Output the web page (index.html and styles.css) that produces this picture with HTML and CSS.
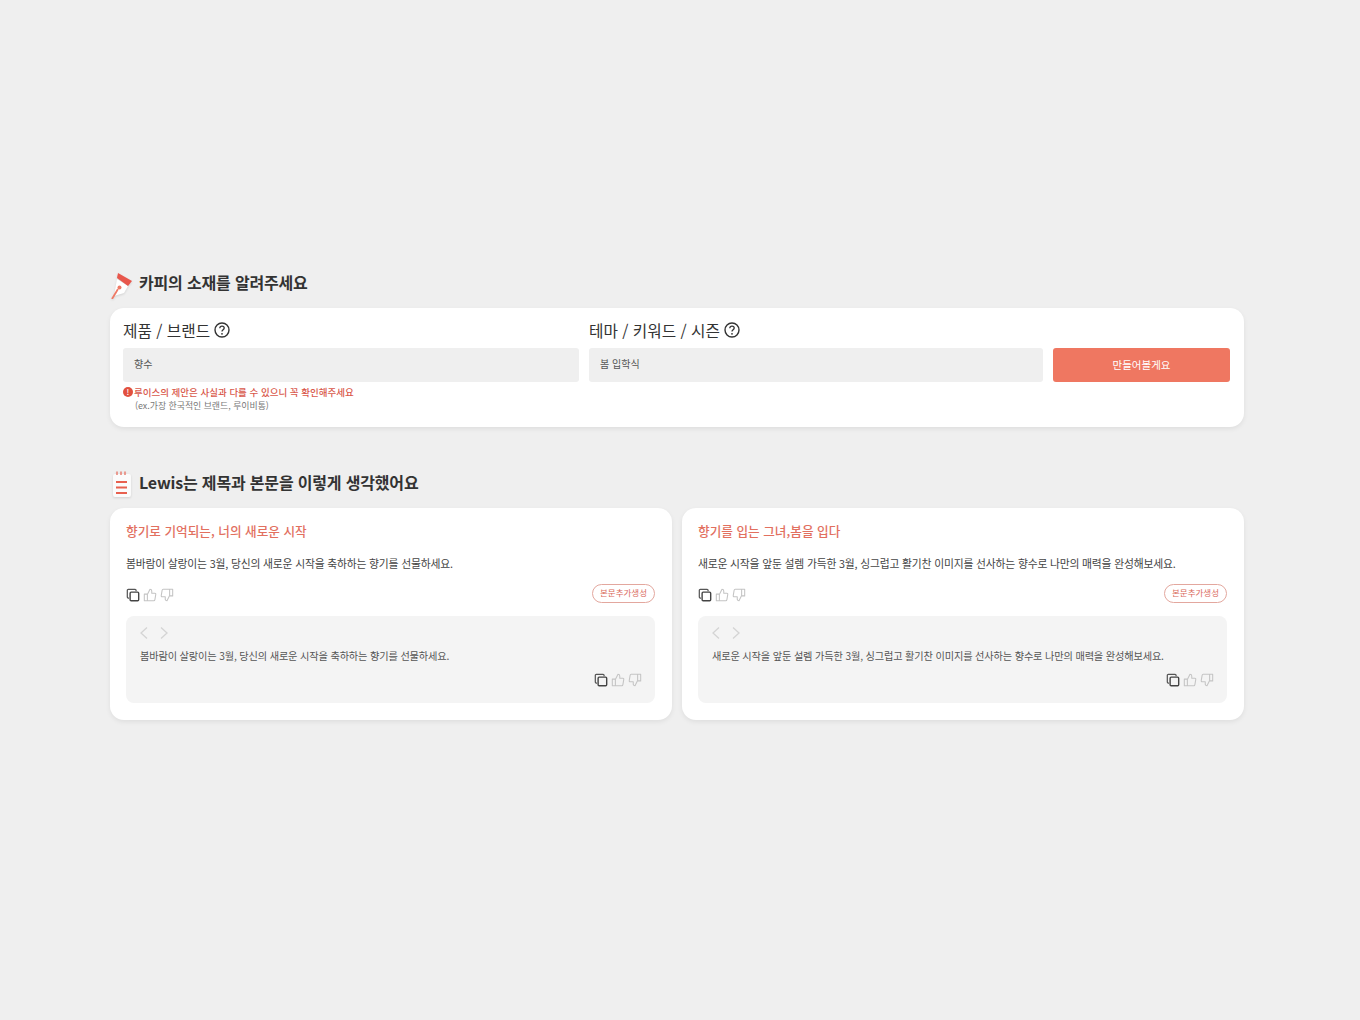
FILE: index.html
```html
<!DOCTYPE html>
<html lang="ko">

<head>
    <meta charset="UTF-8">
    <title>Lewis 카피</title>
    <link rel="stylesheet" href="styles.css">
</head>

<body>
    <svg class="sprites" width="0" height="0" aria-hidden="true">
        <symbol id="copy" viewBox="0 0 16 16">
            <path d="M3.5 11.5H2.6A1.1 1.1 0 0 1 1.5 10.4V2.6A1.1 1.1 0 0 1 2.6 1.5H10.4A1.1 1.1 0 0 1 11.5 2.6V3.6" fill="none" stroke="#555" stroke-width="1.4"/>
            <rect x="4.7" y="4.7" width="9.8" height="9.8" rx="1.2" fill="none" stroke="#444" stroke-width="1.6"/>
        </symbol>
        <symbol id="up" viewBox="0 0 16 16">
            <path d="M5 7v7.5H1.5V7H5zM5 7.4 8 1.5c1.3 0 2 .8 2 2V6h3.6c.7 0 1.1.6 1 1.3l-1 6c-.1.7-.6 1.2-1.3 1.2H5" fill="none" stroke="#c4c4c4" stroke-width="1.2" stroke-linejoin="round"/>
        </symbol>
        <symbol id="down" viewBox="0 0 16 16">
            <path d="M11 9V1.5h3.5V9H11zM11 8.6 8 14.5c-1.3 0-2-.8-2-2V10H2.4c-.7 0-1.1-.6-1-1.3l1-6c.1-.7.6-1.2 1.3-1.2H11" fill="none" stroke="#c4c4c4" stroke-width="1.2" stroke-linejoin="round"/>
        </symbol>
        <symbol id="help" viewBox="0 0 16 16">
            <circle cx="8" cy="8" r="7" fill="none" stroke="#333" stroke-width="1.4"/>
            <path d="M5.8 6.2C5.9 4.9 6.8 4.200 8 4.200c1.3 0 2.200.8 2.200 1.900 0 1.700-2.200 1.700-2.200 3.500" fill="none" stroke="#333" stroke-width="1.3"/>
            <circle cx="8" cy="11.8" r=".9" fill="#333"/>
        </symbol>
    </svg>

    <div class="page">
        <h2 class="section-title">
            <svg class="section-icon" viewBox="0 0 24 30" width="24" height="30">
                <path d="M7 10 18 17 14 24 4 27z" fill="#fff"/>
                <path d="M2 30 8 20" stroke="#ee7a66" stroke-width="1.8" fill="none"/>
                <circle cx="9.5" cy="18.5" r="2" fill="#ee7a66"/>
                <path d="M8 4 22 12 18 17 7 9z" fill="#e8574c"/>
            </svg>
            카피의 소재를 알려주세요
        </h2>

        <section class="panel">
            <div class="field">
                <label class="field-label">제품 / 브랜드 <svg class="help"><use href="#help"/></svg></label>
                <div class="input">향수</div>
            </div>
            <div class="field">
                <label class="field-label">테마 / 키워드 / 시즌 <svg class="help"><use href="#help"/></svg></label>
                <div class="input">봄 입학식</div>
            </div>
            <button class="make-btn">만들어볼게요</button>
            <div class="notes">
                <p class="warn"><span class="warn-dot">!</span>루이스의 제안은 사실과 다를 수 있으니 꼭 확인해주세요</p>
                <p class="example">(ex.가장 한국적인 브랜드, 루이비통)</p>
            </div>
        </section>

        <h2 class="section-title second">
            <svg class="section-icon" viewBox="0 0 24 30" width="24" height="30">
                <rect x="3" y="5" width="18" height="23" rx="2" fill="#fbfbfb"/>
                <path d="M7 2.5V6M11 2.5V6M15 2.5V6" stroke="#e8786a" stroke-width="1.4"/>
                <path d="M6 13h11M6 18.500h11M6 24h11" stroke="#e8604f" stroke-width="2"/>
            </svg>
            Lewis는 제목과 본문을 이렇게 생각했어요
        </h2>

        <div class="cards">
            <article class="card">
                <h3 class="card-title">향기로 기억되는, 너의 새로운 시작</h3>
                <p class="card-text">봄바람이 살랑이는 3월, 당신의 새로운 시작을 축하하는 향기를 선물하세요.</p>
                <div class="card-actions">
                    <div class="icons">
                        <svg><use href="#copy"/></svg><svg><use href="#up"/></svg><svg><use href="#down"/></svg>
                    </div>
                    <span class="pill">본문추가생성</span>
                </div>
                <div class="extra">
                    <div class="arrows">
                        <svg viewBox="0 0 10 14"><path d="M8 1.500 2 7l6 5.500"/></svg>
                        <svg viewBox="0 0 10 14"><path d="M2 1.500 8 7l-6 5.500"/></svg>
                    </div>
                    <p class="extra-text">봄바람이 살랑이는 3월, 당신의 새로운 시작을 축하하는 향기를 선물하세요.</p>
                    <div class="icons end">
                        <svg><use href="#copy"/></svg><svg><use href="#up"/></svg><svg><use href="#down"/></svg>
                    </div>
                </div>
            </article>

            <article class="card">
                <h3 class="card-title">향기를 입는 그녀,봄을 입다</h3>
                <p class="card-text">새로운 시작을 앞둔 설렘 가득한 3월, 싱그럽고 활기찬 이미지를 선사하는 향수로 나만의 매력을 완성해보세요.</p>
                <div class="card-actions">
                    <div class="icons">
                        <svg><use href="#copy"/></svg><svg><use href="#up"/></svg><svg><use href="#down"/></svg>
                    </div>
                    <span class="pill">본문추가생성</span>
                </div>
                <div class="extra">
                    <div class="arrows">
                        <svg viewBox="0 0 10 14"><path d="M8 1.500 2 7l6 5.500"/></svg>
                        <svg viewBox="0 0 10 14"><path d="M2 1.500 8 7l-6 5.500"/></svg>
                    </div>
                    <p class="extra-text">새로운 시작을 앞둔 설렘 가득한 3월, 싱그럽고 활기찬 이미지를 선사하는 향수로 나만의 매력을 완성해보세요.</p>
                    <div class="icons end">
                        <svg><use href="#copy"/></svg><svg><use href="#up"/></svg><svg><use href="#down"/></svg>
                    </div>
                </div>
            </article>
        </div>
    </div>
</body>

</html>
```

FILE: styles.css
```css
body {
    margin: 0;
    padding: 0;
    min-height: 1020px;
    font-family: "Noto Sans CJK KR", "Noto Sans", sans-serif;
    background-color: #efefef;
    color: #333;
}

p,
h2,
h3 {
    margin: 0;
}

.sprites {
    position: absolute;
}

.page {
    width: 1134px;
    margin-left: 110px;
    padding-top: 268px;
}

.section-title {
    display: flex;
    align-items: center;
    gap: 5px;
    height: 40px;
    box-sizing: border-box;
    padding-bottom: 12px;
    font-size: 16px;
    font-weight: 700;
    letter-spacing: -0.17px;
    color: #333;
}

.section-title.second {
    margin-top: 41px;
}

.section-icon {
    flex: none;
    margin-top: 4px;
    filter: drop-shadow(0 1px 1px rgba(0, 0, 0, 0.12));
}

.panel {
    display: grid;
    grid-template-columns: 456px 454px 177px;
    grid-template-rows: auto 1fr;
    column-gap: 10px;
    padding: 12px 14px 14px 13px;
    height: 119px;
    box-sizing: border-box;
    background-color: #fff;
    border-radius: 14px;
    box-shadow: 0 2px 5px rgba(0, 0, 0, 0.07);
}

.field-label {
    display: flex;
    align-items: center;
    gap: 4px;
    height: 20px;
    margin-bottom: 8px;
    font-size: 15.7px;
    color: #333;
}

.help {
    width: 16px;
    height: 16px;
}

.input {
    height: 34px;
    line-height: 32px;
    padding-left: 11px;
    font-size: 10px;
    color: #555;
    background-color: #efefef;
    border-radius: 3px;
}

.make-btn {
    align-self: end;
    height: 34px;
    padding: 0 0 2px;
    font-family: inherit;
    font-size: 10.5px;
    color: #fff;
    background-color: #ef7761;
    border: none;
    border-radius: 3px;
}

.notes {
    grid-column: 1 / -1;
    padding-top: 3px;
}

.warn {
    display: flex;
    align-items: center;
    height: 13px;
    margin-bottom: 1px;
    font-size: 9.5px;
    font-weight: 500;
    color: #d9584b;
}

.warn-dot {
    width: 10px;
    height: 10px;
    margin-right: 1px;
    line-height: 10px;
    text-align: center;
    font-size: 8px;
    color: #fff;
    background-color: #e2503f;
    border-radius: 50%;
}

.example {
    height: 13px;
    padding-left: 12px;
    line-height: 13px;
    font-size: 8.9px;
    color: #777;
}

.cards {
    display: grid;
    grid-template-columns: 1fr 1fr;
    gap: 10px;
}

.card {
    height: 212px;
    box-sizing: border-box;
    padding: 13px 17px 17px 16px;
    background-color: #fff;
    border-radius: 14px;
    box-shadow: 0 2px 5px rgba(0, 0, 0, 0.07);
}

.card-title {
    height: 20px;
    line-height: 20px;
    font-size: 12.65px;
    font-weight: 500;
    color: #e2705f;
}

.card-text {
    margin-top: 13px;
    height: 18px;
    line-height: 18px;
    font-size: 10.8px;
    letter-spacing: -0.18px;
    color: #444;
}

.card-actions {
    display: flex;
    justify-content: space-between;
    align-items: center;
    height: 20px;
    margin-top: 12px;
}

.icons {
    display: flex;
    gap: 3px;
    margin-top: 2px;
}

.icons svg {
    width: 14px;
    height: 14px;
}

.icons.end {
    justify-content: flex-end;
    margin-top: 8px;
    padding-right: 12px;
}

.pill {
    width: 63px;
    height: 19px;
    box-sizing: border-box;
    margin-top: -1px;
    line-height: 15px;
    text-align: center;
    font-size: 8.5px;
    color: #d9695b;
    background-color: #fff;
    border: 1px solid #e3a79e;
    border-radius: 10px;
}

.extra {
    height: 87px;
    box-sizing: border-box;
    margin-top: 12px;
    padding: 10px 1px 0 14px;
    background-color: #f4f4f4;
    border-radius: 8px;
}

.arrows {
    display: flex;
    gap: 10px;
    height: 14px;
    margin-left: -1px;
}

.arrows svg {
    width: 10px;
    height: 14px;
    fill: none;
    stroke: #d4d4d4;
    stroke-width: 1.3;
}

.extra-text {
    margin-top: 7px;
    height: 18px;
    line-height: 18px;
    font-size: 10.2px;
    letter-spacing: -0.15px;
    color: #555;
}
```
